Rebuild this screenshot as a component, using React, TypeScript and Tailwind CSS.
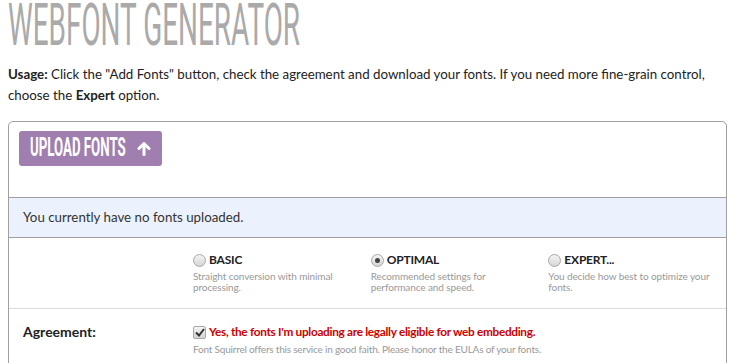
import React from "react";

const options = [
  { label: "BASIC", desc: "Straight conversion with minimal processing.", checked: false },
  { label: "OPTIMAL", desc: "Recommended settings for performance and speed.", checked: true },
  { label: "EXPERT...", desc: "You decide how best to optimize your fonts.", checked: false },
];

function Radio({ checked }: { checked: boolean }) {
  return (
    <span className="w-[13px] h-[13px] rounded-full border border-[#a8a8a8] bg-gradient-to-b from-[#f4f4f4] to-[#d6d6d6] flex items-center justify-center shrink-0">
      {checked && <span className="w-[5px] h-[5px] rounded-full bg-[#444]" />}
    </span>
  );
}

export default function App() {
  return (
    <div className="w-[732px] h-[363px] overflow-hidden bg-white pl-[8px] font-['Lato',sans-serif] text-[#222]">
      {/* Title */}
      <div className="h-[52px]">
        <h1 className="inline-block origin-top-left scale-x-[0.465] whitespace-nowrap font-['Roboto',sans-serif] font-normal text-[60px] leading-[50px] text-[#aaaaaa]">
          WEBFONT GENERATOR
        </h1>
      </div>

      <p className="mt-[12px] text-[13.3px] leading-[21px] text-[#222] w-[716px]">
        <b>Usage:</b> Click the "Add Fonts" button, check the agreement and download your fonts. If you need more fine-grain control, choose the <b>Expert</b> option.
      </p>

      <div className="mt-[15px] w-[719px] border border-[#a0a0a0] rounded-[5px]">
        {/* Upload */}
        <div className="pt-[9px] pl-[10px] h-[75px]">
          <button className="w-[143px] h-[35px] rounded-[3px] bg-[#a07eb0] flex items-center pl-[11px] gap-[11px] text-white">
            <span className="w-[96px] overflow-visible text-left">
              <span className="inline-block origin-left scale-x-[0.53] whitespace-nowrap font-['Roboto',sans-serif] font-bold text-[25px] leading-[24px]">
                UPLOAD FONTS
              </span>
            </span>
            <svg width="14" height="15" viewBox="0 0 14 15" fill="none" stroke="white" strokeWidth="3" strokeLinecap="round" strokeLinejoin="round">
              <path d="M7 13.5V2.5M2 7.5l5-5 5 5" />
            </svg>
          </button>
        </div>

        {/* Status */}
        <div className="border-t border-[#a0a0a0] bg-[#ebf2fd] h-[40px] flex items-center pl-[14px] text-[13.3px] text-[#333]">
          You currently have no fonts uploaded.
        </div>

        {/* Modes */}
        <div className="border-t border-[#a0a0a0] h-[71px] flex pl-[184px] pt-[14px]">
          {options.map((o) => (
            <div key={o.label} className="w-[180px] pr-[16px]">
              <div className="flex items-center gap-[3px]">
                <Radio checked={o.checked} />
                <span className="text-[12px] font-bold text-[#222] leading-[16px] tracking-[-0.2px]">{o.label}</span>
              </div>
              <p className="mt-[3px] text-[10px] leading-[11px] text-[#999] tracking-[-0.1px]">{o.desc}</p>
            </div>
          ))}
        </div>

        {/* Agreement */}
        <div className="border-t border-[#dcdcdc] flex pl-[14px] pt-[14px] h-[60px]">
          <div className="w-[170px] text-[14px] font-bold text-[#222] leading-[18px]">Agreement:</div>
          <div>
            <div className="flex items-center gap-[3px]">
              <span className="w-[13px] h-[13px] rounded-[2px] border border-[#a8a8a8] bg-gradient-to-b from-[#f4f4f4] to-[#d4d4d4] flex items-center justify-center">
                <svg width="10" height="9" viewBox="0 0 10 9" fill="none" stroke="#333" strokeWidth="2">
                  <path d="M1 4.5l3 3 5-6.5" />
                </svg>
              </span>
              <span className="text-[11.8px] font-bold text-[#cc0000] leading-[18px] tracking-[-0.3px]">
                Yes, the fonts I'm uploading are legally eligible for web embedding.
              </span>
            </div>
            <p className="mt-[2px] text-[10px] leading-[12px] text-[#999] tracking-[-0.2px]">
              Font Squirrel offers this service in good faith. Please honor the EULAs of your fonts.
            </p>
          </div>
        </div>
      </div>
    </div>
  );
}
